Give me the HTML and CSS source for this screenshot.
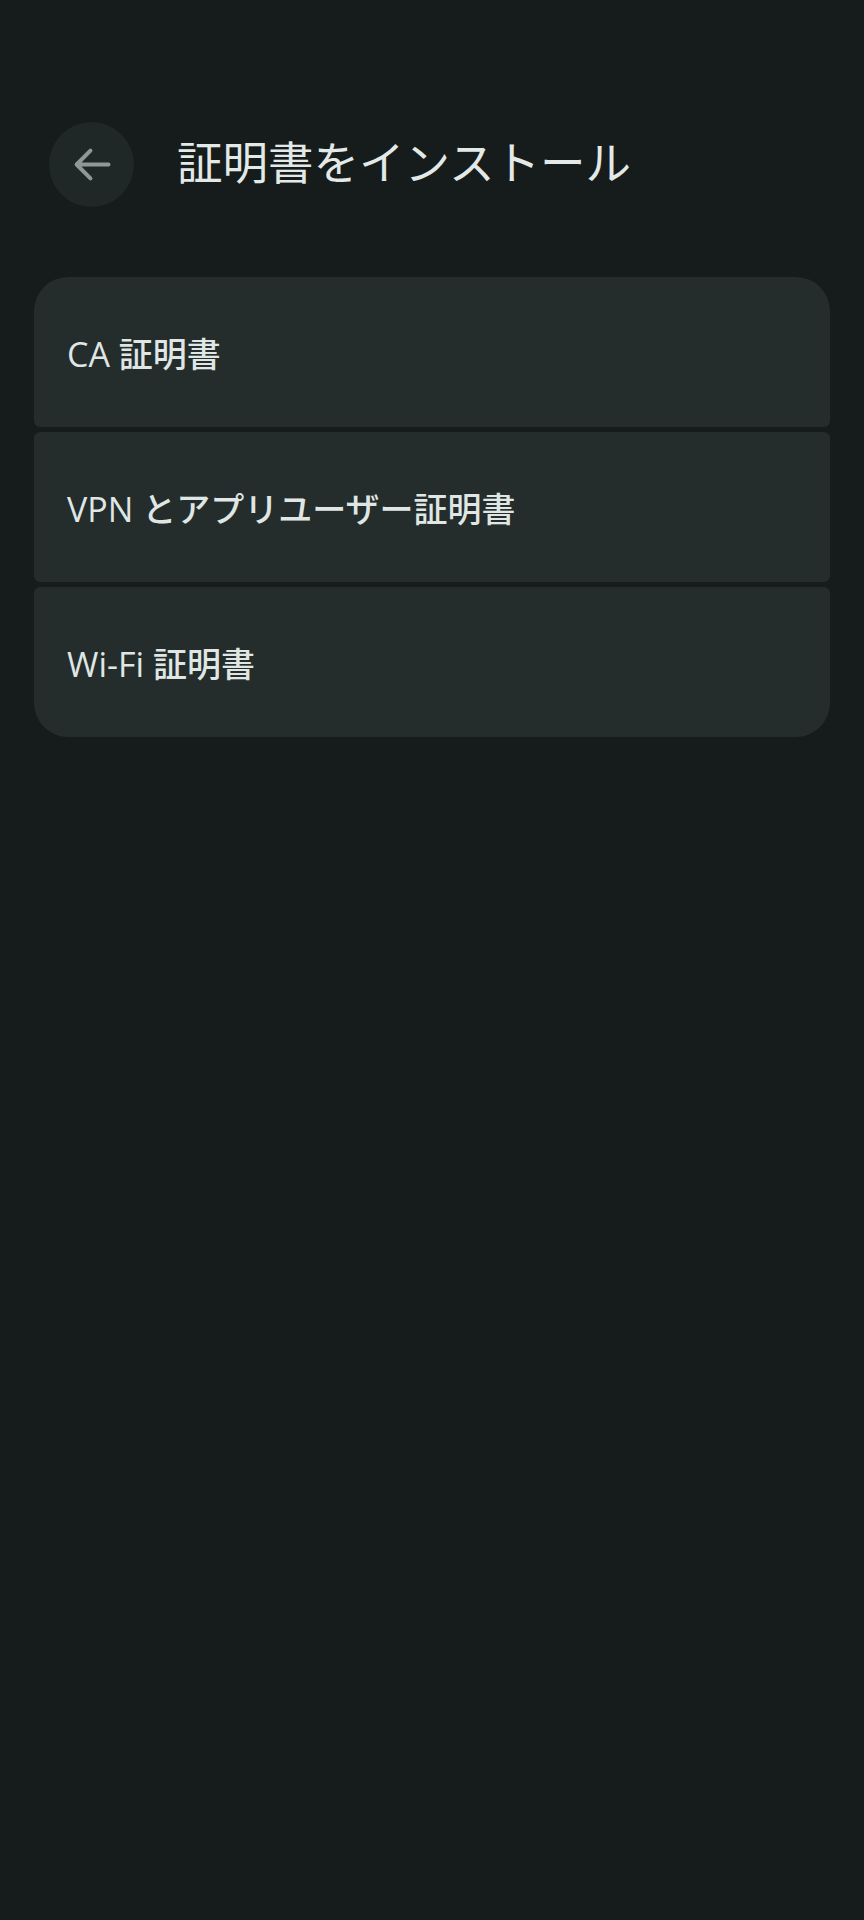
FILE: index.html
```html
<!DOCTYPE html>
<html lang="ja">
<head>
<meta charset="utf-8">
<title>証明書をインストール</title>
<link rel="stylesheet" href="styles.css">
</head>
<body>
<div class="screen">
  <header class="topbar">
    <button class="back" aria-label="戻る">
      <svg viewBox="0 0 24 24" width="51" height="51"><path d="M20 12H5M11.5 5.5L5 12l6.5 6.5" fill="none" stroke="currentColor" stroke-width="1.9" stroke-linecap="round" stroke-linejoin="round"/></svg>
    </button>
    <h1 class="title">証明書をインストール</h1>
  </header>
  <ul class="list">
    <li class="item">CA 証明書</li>
    <li class="item">VPN とアプリユーザー証明書</li>
    <li class="item">Wi-Fi 証明書</li>
  </ul>
</div>
</body>
</html>
```
FILE: styles.css
```css
html, body {
  margin: 0;
  padding: 0;
  background: #161b1b;
}
body {
  width: 864px;
  min-height: 1920px;
  font-family: "Open Sans", "Noto Sans CJK JP", sans-serif;
  color: #dfe6e4;
}
.screen {
  padding-top: 122px;
}
.topbar {
  display: flex;
  align-items: center;
  padding-left: 49px;
  gap: 43px;
}
.back {
  width: 85px;
  height: 85px;
  border-radius: 50%;
  border: none;
  background: #1f2827;
  color: #8e9996;
  display: flex;
  align-items: center;
  justify-content: center;
  padding: 0;
  flex: none;
}
.back svg {
  display: block;
}
.title {
  margin: 0 0 8px;
  font-family: "Noto Sans CJK JP", sans-serif;
  font-weight: 400;
  font-size: 45.5px;
  line-height: 1;
  color: #e2e9e7;
}
.list {
  list-style: none;
  margin: 70px 34px 0;
  padding: 0;
  display: flex;
  flex-direction: column;
  gap: 5px;
}
.item {
  height: 150px;
  background: #242c2c;
  border-radius: 6px;
  display: flex;
  align-items: center;
  padding-left: 33px;
  font-size: 34px;
  font-weight: 500;
  font-family: "Open Sans", "Noto Sans CJK JP", sans-serif;
}
.item:first-child {
  border-top-left-radius: 34px;
  border-top-right-radius: 34px;
}
.item:last-child {
  border-bottom-left-radius: 34px;
  border-bottom-right-radius: 34px;
}
```
